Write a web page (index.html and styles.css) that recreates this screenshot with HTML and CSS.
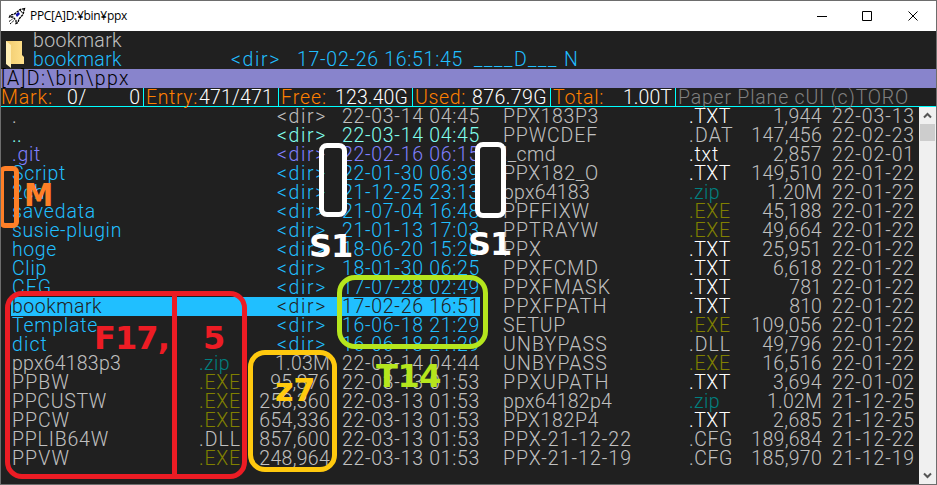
FILE: index.html
```html
<!DOCTYPE html>
<html lang="en">
<head>
<meta charset="utf-8">
<title>PPC[A]D:¥bin¥ppx</title>
<link rel="stylesheet" href="styles.css">
</head>
<body>
<div class="window">
  <header class="titlebar">
    <svg class="rocket" width="18" height="18" viewBox="0 0 18 18"><path d="M16.500 1.500l-4.500 1-5.500 4.500-4 1-1 2 3.500 0 3 3.500 0 3 2-1 1-3.500 4-4.500z" fill="#fff" stroke="#000" stroke-width="1.300" stroke-dasharray="2.500 .7"/><path d="M7.500 7.500l3-2.500 1.500 2-3 3z" fill="#1010b0"/><path d="M12 3l2.500 3" stroke="#000"/><path d="M1 14.500l3.500-2.500M2 17l4-3.500" stroke="#000" stroke-dasharray="2 1"/></svg>
    <span class="caption" data-w="97">PPC[A]D:¥bin¥ppx</span>
    <svg class="controls" width="104" height="12" viewBox="0 0 104 12"><path d="M0 5.500h10M45.500 .5h9v9h-9zM91.500 .5l9 9M100.500 .5l-9 9" fill="none" stroke="#000"/></svg>
  </header>
  <section class="info">
    <svg class="folder" width="20" height="28" viewBox="0 0 20 28"><defs><linearGradient id="g"><stop offset="0" stop-color="#f0cb70"/><stop offset="1" stop-color="#ffe08a"/></linearGradient></defs><path d="M1 1h16v14l2 2v7H1z" fill="url(#g)"/><path d="M1 1l5 4v23l-5-4z" fill="#ffeeb4"/></svg>
    <div class="info-lines">
      <div class="plain"><span data-w="89">bookmark</span></div>
      <div class="dir detail"><span class="d-name" data-w="89">bookmark</span><span class="d-dir" data-w="50">&lt;dir&gt;</span><span class="d-time" data-w="166">17-02-26 16:51:45</span><span class="attr"><span data-w="40">____</span><span class="attr-d" data-w="14">D</span><span data-w="30">___</span></span><span data-w="14">N</span></div>
    </div>
  </section>
  <div class="path"><span data-w="129">[A]D:\bin\ppx</span></div>
  <div class="status">
    <div class="s1"><b data-w="52">Mark:</b><span data-w="20">0/</span><span>0</span></div>
    <div class="s2"><b data-w="52">Entry:</b><span data-w="74">471/471</span></div>
    <div class="s3"><b data-w="46">Free:</b><span data-w="73">123.40G</span></div>
    <div class="s4"><b data-w="51">Used:</b><span data-w="75">876.79G</span></div>
    <div class="s5"><b data-w="51">Total:</b><span data-w="49">1.00T</span></div>
    <div class="s6"><span data-w="231">Paper Plane cUI (c)TORO</span></div>
  </div>
  <main class="body">
    <div class="list left" id="left"></div>
    <div class="list right" id="right"></div>
    <div class="scroll">
      <svg width="17" height="17" viewBox="0 0 17 17"><path d="M5 10.500l3.500-3.500 3.500 3.500" fill="none" stroke="#555" stroke-width="2"/></svg>
      <i class="thumb"></i>
      <svg class="down" width="17" height="17" viewBox="0 0 17 17"><path d="M5 6.500l3.500 3.500 3.500-3.500" fill="none" stroke="#555" stroke-width="2"/></svg>
    </div>
  </main>
  <i class="box mark"></i><i class="box gap1"></i><i class="box gap2"></i>
  <i class="box name"></i><i class="divider"></i><i class="box size-box"></i><i class="box time-box"></i>
  <span class="label l-m">M</span>
  <span class="label l-s1" data-w="43">S1</span>
  <span class="label l-s2" data-w="43">S1</span>
  <span class="label l-f" data-w="75">F17,</span>
  <span class="label l-5" data-w="22">5</span>
  <span class="label l-z" data-w="40">z7</span>
  <span class="label l-t" data-w="65">T14</span>
</div>
<script src="main.js"></script>
</body>
</html>
```
FILE: main.js
```js
// name, name width, extension, size, date, colour class
const left = [
  ['.', 5, '', '<dir>', '22-03-14 04:45', 'plain'],
  ['..', 10, '', '<dir>', '22-03-14 04:45', 'parent'],
  ['.git', 29, '', '<dir>', '22-02-16 06:15', 'hidden'],
  ['Script', 54, '', '<dir>', '22-01-30 06:39', 'dir'],
  ['2ch', 33, '', '<dir>', '21-12-25 23:13', 'dir'],
  ['savedata', 84, '', '<dir>', '21-07-04 16:48', 'dir'],
  ['susie-plugin', 110, '', '<dir>', '21-01-13 17:03', 'dir'],
  ['hoge', 45, '', '<dir>', '18-06-20 15:20', 'dir'],
  ['Clip', 35, '', '<dir>', '18-01-30 06:25', 'dir'],
  ['CFG', 40, '', '<dir>', '17-07-28 02:49', 'dir'],
  ['bookmark', 90, '', '<dir>', '17-02-26 16:51', 'dir selected'],
  ['Template', 86, '', '<dir>', '16-06-18 21:29', 'dir'],
  ['dict', 36, '', '<dir>', '16-06-18 21:29', 'dir'],
  ['ppx64183p3', 109, '.zip', '1.03M', '22-03-14 04:44', 'plain'],
  ['PPBW', 58, '.EXE', '95,876', '22-03-13 01:53', 'plain'],
  ['PPCUSTW', 95, '.EXE', '258,360', '22-03-13 01:53', 'plain'],
  ['PPCW', 58, '.EXE', '654,336', '22-03-13 01:53', 'plain'],
  ['PPLIB64W', 97, '.DLL', '857,600', '22-03-13 01:53', 'plain'],
  ['PPVW', 58, '.EXE', '248,964', '22-03-13 01:53', 'plain']
];
const right = [
  ['PPX183P3', 96, '.TXT', '1,944', '22-03-13'],
  ['PPWCDEF', 95, '.DAT', '147,456', '22-02-23'],
  ['!_cmd', 53, '.txt', '2,857', '22-02-01'],
  ['PPX182_O', 96, '.TXT', '149,510', '22-01-22'],
  ['ppx64183', 87, '.zip', '1.20M', '22-01-22'],
  ['PPFFIXW', 87, '.EXE', '45,188', '22-01-22'],
  ['PPTRAYW', 96, '.EXE', '49,664', '22-01-22'],
  ['PPX', 39, '.TXT', '25,951', '22-01-22'],
  ['PPXFCMD', 96, '.TXT', '6,618', '22-01-22'],
  ['PPXFMASK', 108, '.TXT', '781', '22-01-22'],
  ['PPXFPATH', 105, '.TXT', '810', '22-01-22'],
  ['SETUP', 63, '.EXE', '109,056', '22-01-22'],
  ['UNBYPASS', 105, '.DLL', '49,796', '22-01-22'],
  ['UNBYPASS', 105, '.EXE', '16,516', '22-01-22'],
  ['PPXUPATH', 107, '.TXT', '3,694', '22-01-02'],
  ['ppx64182p4', 109, '.zip', '1.02M', '21-12-25'],
  ['PPX182P4', 96, '.TXT', '2,685', '21-12-25'],
  ['PPX-21-12-22', 129, '.CFG', '189,684', '21-12-22'],
  ['PPX-21-12-19', 129, '.CFG', '185,970', '21-12-19']
];
const extWidth = { '.TXT': 42, '.txt': 30, '.DAT': 45, '.zip': 31, '.EXE': 42, '.DLL': 42, '.CFG': 44 };

function cell(row, cls, text, width) {
  if (!text) { row.append(document.createElement('div')); return; }
  const c = document.createElement('div');
  c.className = cls;
  const s = document.createElement('span');
  s.textContent = text;
  if (width) s.dataset.w = width;
  c.append(s);
  row.append(c);
}
function fill(id, rows) {
  const list = document.getElementById(id);
  for (const [name, w, ext, size, date, tone] of rows) {
    const row = document.createElement('div');
    row.className = 'row ' + (tone || 'plain');
    cell(row, 'name-cell', name, w);
    cell(row, 'ext ' + ext.slice(1).toLowerCase(), ext, extWidth[ext]);
    const sw = [...size].reduce((n, ch) => n + (ch === ',' || ch === '.' ? 5.3 : ch === 'M' ? 17 : 10.9), 0);
    cell(row, 'size', size, size === '<dir>' ? 50 : sw);
    cell(row, 'date', date, date.length > 8 ? 138 : 83);
    list.append(row);
  }
}
fill('left', left);
fill('right', right);
const range = document.createRange();
for (const el of document.querySelectorAll('[data-w]')) {
  range.selectNodeContents(el);
  const gap = (el.dataset.w - range.getBoundingClientRect().width) / el.textContent.length;
  el.style.letterSpacing = gap.toFixed(3) + 'px';
}
```
FILE: styles.css
```css
* { box-sizing: border-box; }
body { margin: 0; background: #202020; }
.window { position: relative; width: 937px; height: 485px; border: 1px solid #6d6d6d; background: #202020; overflow: hidden; display: flex; flex-direction: column; font: 300 19.500px/19px Roboto, sans-serif; white-space: nowrap; color: #c0c0c0; }
.titlebar { height: 30px; flex: none; background: #fff; color: #000; display: flex; align-items: center; font: 12px/30px "Open Sans", sans-serif; }
.rocket { margin-left: 7px; }
.caption { margin-left: 4px; }
.controls { margin: 1px 15px 0 auto; }
.info { height: 38px; flex: none; display: flex; }
.folder { margin: 9px 0 0 4px; }
.info-lines { margin-left: 8px; }
.info-lines > div { height: 19px; }
.detail { display: flex; }
.d-name { width: 198px; }
.d-dir { width: 66px; }
.d-time { width: 177px; }
.attr { width: 90px; display: flex; }
.path { height: 19px; flex: none; background: #8884cc; color: #000; }
.status { height: 19px; flex: none; display: flex; border-bottom: 1px solid #00ffff; color: #fff; }
.status > div { height: 18px; display: flex; justify-content: space-between; border-right: 1px solid #00ffff; padding: 0 3px 0 2px; }
.status b { font-weight: 300; color: #ff8000; }
.status .s1 { width: 143px; padding-left: 0; }
.s1 span:nth-child(2) { margin-right: 28px; }
.status .s2 { width: 135px; padding-right: 5px; }
.status .s3 { width: 134px; padding-right: 4px; }
.s4 { width: 138px; }
.s5 { width: 125px; }
.status .s6 { border: 0; color: #808080; }
.body { flex: 1; display: flex; }
.left { width: 490px; padding-left: 10px; }
.right { width: 428px; padding-left: 11px; }
.row { height: 19px; display: grid; }
.left .row { width: 469px; grid-template-columns: 187px 50px 94px 138px; }
.right .row { grid-template-columns: 187px 50px 83px 85px; }
.name-cell { padding-left: 1px; }
.left .ext { padding-left: 1px; }
.size { text-align: right; }
.left .size { padding-right: 12px; }
.left .row.dir .size, .left .row.parent .size, .left .row.hidden .size, .left .row:first-child .size { padding-right: 15px; }
.right .date { padding-left: 10px; }
.plain { color: #c0c0c0; }
.parent { color: #80ffee; }
.hidden { color: #8080ff; }
.dir { color: #20bfff; }
.selected { background: #20bfff; color: #202020; }
.txt { color: #fff; }
.exe { color: #808000; }
.zip { color: #008080; }
.scroll { width: 17px; background: #f0f0f0; display: flex; flex-direction: column; }
.scroll svg { flex: none; }
.thumb { height: 17px; margin: 0 1px; background: #cdcdcd; }
.down { margin-top: auto; }
.box, .divider, .label { position: absolute; }
.box { border: 5px solid; }
.mark { left: -2px; top: 165px; width: 20px; height: 62px; border-radius: 6px; color: #ff7f27; }
.gap1 { left: 318px; top: 142px; width: 28px; height: 74px; border-radius: 8px; color: #fff; }
.gap2 { left: 474px; top: 141px; width: 31px; height: 76px; border-radius: 8px; color: #fff; }
.name { left: 4px; top: 290px; width: 242px; height: 188px; border-radius: 17px; color: #ed1c24; }
.divider { left: 171px; top: 293px; width: 5px; height: 183px; background: #ed1c24; }
.size-box { left: 247px; top: 349px; width: 89px; height: 122px; border-radius: 17px; color: #ffc90e; }
.time-box { left: 336px; top: 274px; width: 151px; height: 74px; border-radius: 18px; color: #b5e61d; }
.label { font: bold 32px/38px "DejaVu Sans", sans-serif; }
.l-m { left: 23px; top: 175px; color: #ff7f27; transform: scaleX(.92); transform-origin: left; }
.l-s1 { left: 308px; top: 226px; color: #fff; }
.l-s2 { left: 467px; top: 224px; color: #fff; }
.l-f { left: 93px; top: 318px; color: #ed1c24; }
.l-5 { left: 202px; top: 318px; color: #ed1c24; }
.l-z { left: 274px; top: 370px; color: #ffc90e; }
.l-t { left: 375px; top: 356px; color: #b5e61d; }
```
